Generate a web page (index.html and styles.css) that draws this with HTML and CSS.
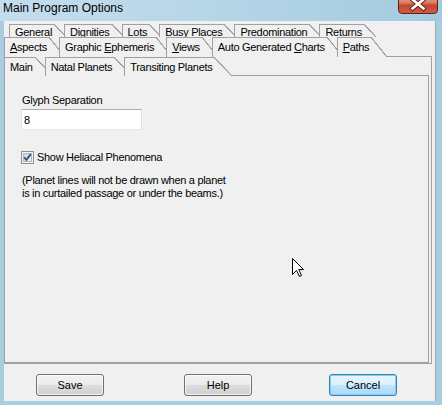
FILE: index.html
```
<!DOCTYPE html>
<html lang="en">
<head>
    <meta charset="UTF-8">
    <title>Main Program Options</title>
    <link rel="stylesheet" href="styles.css">
</head>
<body>
    <div class="window">
        <div class="titlebar">
            <span class="title">Main Program Options</span>
            <span class="close-btn">
                <svg width="40" height="18" viewBox="0 0 40 18">
                    <path d="M14.5 4.5 L25.5 13.5 M25.5 4.5 L14.5 13.5" stroke="#6b2419" stroke-width="4.6" stroke-linecap="square"/>
                    <path d="M14.5 4.5 L25.5 13.5 M25.5 4.5 L14.5 13.5" stroke="#fff" stroke-width="2.6" stroke-linecap="square"/>
                </svg>
            </span>
        </div>

        <div class="client">
            <div class="tabset">
                <div class="tabrow row-back">
                    <span class="tab">General</span>
                    <span class="tab">Dignities</span>
                    <span class="tab">Lots</span>
                    <span class="tab">Busy Places</span>
                    <span class="tab">Predomination</span>
                    <span class="tab"><u>R</u>eturns</span>
                </div>
                <div class="tabrow row-front">
                    <span class="tab"><u>A</u>spects</span>
                    <span class="tab">Graphic <u>E</u>phemeris</span>
                    <span class="tab"><u>V</u>iews</span>
                    <span class="tab">Auto Generated <u>C</u>harts</span>
                    <span class="tab"><u>P</u>aths</span>
                    <span class="tab-fill"></span>
                </div>

                <div class="tabpage">
                    <div class="tabrow row-inner">
                        <span class="tab">Main</span>
                        <span class="tab">Natal Planets</span>
                        <span class="tab">Transiting Planets</span>
                        <span class="tab-fill"></span>
                    </div>
                    <div class="page">
                        <label class="field-label" for="glyph-sep">Glyph Separation</label>
                        <input id="glyph-sep" class="field" type="text" value="8">

                        <label class="check">
                            <span class="checkbox">
                                <svg width="13" height="13" viewBox="0 0 13 13">
                                    <defs>
                                        <linearGradient id="boxfill" x1="0" y1="0" x2="1" y2="1">
                                            <stop offset="0" stop-color="#c9ced6"/>
                                            <stop offset="1" stop-color="#f4f5f7"/>
                                        </linearGradient>
                                    </defs>
                                    <rect x="0.5" y="0.5" width="12" height="12" fill="#f4f4f4" stroke="#8f8f8f"/>
                                    <rect x="2.5" y="2.5" width="8" height="8" fill="url(#boxfill)" stroke="#b3b8c0"/>
                                    <path d="M3.2 6.4 L5.4 8.8 L9.8 3.2" fill="none" stroke="#3b4f86" stroke-width="1.9"/>
                                </svg>
                            </span>
                            Show Heliacal Phenomena
                        </label>

                        <p class="note">(Planet lines will not be drawn when a planet<br>is in curtailed passage or under the beams.)</p>
                    </div>
                </div>
            </div>

            <div class="buttons">
                <button class="btn">Save</button>
                <button class="btn btn-help">Help</button>
                <button class="btn btn-cancel">Cancel</button>
            </div>
        </div>

        <!-- mouse pointer caught in the screenshot -->
        <svg class="pointer" width="13" height="20" viewBox="0 0 13 20">
            <path d="M0.5 0.5 L0.5 16.5 L4.5 12.5 L7.5 18.5 L9.5 17.5 L6.8 11.5 L11.5 11.5 Z" fill="#fff" stroke="#000"/>
        </svg>
    </div>
</body>
</html>
```

FILE: styles.css
```
body {
    margin: 0;
    background-color: #a9cde0;
    font-family: "Liberation Sans", Arial, sans-serif;
    font-size: 11px;
    letter-spacing: -0.3px;
    color: #000;
}
.window {
    position: relative;
    width: 442px;
    height: 405px;
    overflow: hidden;
}
.titlebar {
    display: flex;
    height: 21px;
    background: linear-gradient(to right, #c4dded 0%, #b7d6e8 45%, #a3cbde 100%);
}
.title {
    flex: 1;
    padding: 1px 0 0 3px;
    font-size: 12px;
    line-height: 14px;
    letter-spacing: 0;
}
.close-btn {
    display: block;
    width: 40px;
    height: 19px;
    margin: -5px 4px 0 0;
    box-sizing: border-box;
    border: 1px solid #5e2219;
    border-radius: 0 0 4px 4px;
    background: linear-gradient(#e9b1a4, #d97a66 40%, #c44630 55%, #cf5d43);
}
.close-btn svg {
    display: block;
    margin: -1px 0 0 -1px;
}
.client {
    margin-left: 4px;
    width: 431px;
    height: 380px;
    border-right: 1px solid #a7a7a7;
    background-color: #f0f0f0;
}
.tabset {
    width: 428px;
    padding-top: 3px;
}

/* slanted tabs */
.tabrow {
    display: flex;
    line-height: 13px;
    white-space: nowrap;
}
.tab {
    display: block;
    border-left: 1px solid #a0a0a0;
    background:
        linear-gradient(#a0a0a0, #a0a0a0) left top / calc(100% - var(--slant)) 1px no-repeat,
        linear-gradient(to top right, transparent calc(50% - 0.9px), #a0a0a0 calc(50% - 0.5px), #a0a0a0 calc(50% + 0.3px), transparent calc(50% + 0.7px)) right top / var(--slant) 100% no-repeat,
        #f0f0f0;
}
.tab u {
    text-underline-offset: 1px;
}
.tab-fill {
    flex: 1;
    border-bottom: 1px solid #a0a0a0;
}
.row-back {
    height: 13px;
    overflow: hidden;
    padding-left: 5px;
}
.row-back .tab {
    --slant: 14px;
    height: 15px;
    box-sizing: border-box;
    padding: 2px 16px 0 5px;
    margin-left: -4px;
}
.row-front .tab {
    --slant: 16px;
    padding: 4px 18px 3px 5px;
    margin-left: -6px;
}
.row-inner .tab {
    --slant: 18px;
    padding: 4px 20px 2px 5px;
    margin-left: -8px;
}
.tabrow .tab:first-child {
    margin-left: 0;
}

.tabpage {
    border-right: 1px solid #a0a0a0;
    border-bottom: 1px solid #a0a0a0;
    padding-right: 2px;
}
.page {
    height: 287px;
    box-sizing: border-box;
    border: 1px solid #a0a0a0;
    border-top: none;
    padding: 18px 0 0 17px;
    line-height: 13px;
}
.field-label {
    display: block;
}
.field {
    display: block;
    width: 121px;
    height: 21px;
    box-sizing: border-box;
    margin: 2px 0 0 -1px;
    padding: 0 2px;
    border: 1px solid;
    border-color: #abadb3 #dbdfe6 #e3e9ef #e2e3ea;
    font: inherit;
    background: #fff;
    outline: none;
}
.check {
    display: flex;
    margin: 21px 0 0 -1px;
}
.checkbox {
    width: 13px;
    height: 13px;
    margin-right: 3px;
}
.checkbox svg {
    display: block;
}
.note {
    margin: 10px 0 0;
}

.buttons {
    display: flex;
    margin-top: 10px;
    padding-left: 32px;
}
.btn {
    width: 68px;
    height: 22px;
    padding: 0;
    border: 1px solid #707070;
    border-radius: 3px;
    font: inherit;
    color: #000;
    background: linear-gradient(#f2f2f2, #ebebeb 50%, #dddddd 50%, #cfcfcf);
    box-shadow: inset 0 0 0 1px rgba(255, 255, 255, 0.7);
}
.btn-help {
    margin-left: 80px;
}
.btn-cancel {
    margin-left: 77px;
    border-color: #3c7fb1;
    background: linear-gradient(#eaf6fd, #d9f0fc 50%, #bee6fd 50%, #a7d9f5);
    box-shadow: inset 0 0 0 1px #7fd0f4;
}

.pointer {
    position: absolute;
    left: 292px;
    top: 258px;
}
```
